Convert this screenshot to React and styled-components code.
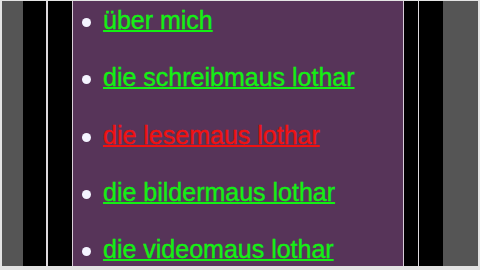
import React from "react";
import styled, { createGlobalStyle } from "styled-components";

const GlobalStyle = createGlobalStyle`
  html, body {
    margin: 0;
    padding: 0;
    background: #e6e6e6;
  }
`;

const Frame = styled.div`
  box-sizing: border-box;
  width: 480px;
  height: 270px;
  display: flex;
  overflow: hidden;
  border-style: solid;
  border-color: #e4e4e4;
  border-width: 1px 2px 4px 2px;
  background: #555555;
`;

const Strip = styled.div`
  flex: 0 0 auto;
  box-sizing: content-box;
  width: ${(p) => p.w}px;
  background: ${(p) => p.bg};
  border-left: ${(p) => (p.lineLeft ? `${p.lineLeft}px solid #dedade` : "none")};
  border-right: ${(p) => (p.lineRight ? `${p.lineRight}px solid #dedade` : "none")};
`;

const Content = styled.div`
  flex: 0 0 auto;
  width: 330px;
  background: #573459;
  border-left: 1px solid #d9cdd9;
  border-right: 1px solid #d9cdd9;
  padding-top: 5px;
`;

const Menu = styled.ul`
  list-style: none;
  margin: 0;
  padding: 0 0 0 9px;
`;

const Item = styled.li`
  display: flex;
  align-items: flex-start;
  height: 28px;
  margin-bottom: 29.25px;
  font-family: "Liberation Sans", Arial, sans-serif;
  font-size: 25px;
  line-height: 28px;
  white-space: nowrap;
`;

const Bullet = styled.span`
  flex: 0 0 auto;
  width: 9px;
  height: 9px;
  margin-top: 12px;
  margin-right: 12px;
  border-radius: 50%;
  background: #f4f4ff;
`;

const Link = styled.a`
  color: ${(p) => (p.active ? "#f01212" : "#14f014")};
  text-decoration: underline;
  text-decoration-thickness: 2px;
  -webkit-text-stroke: 0.35px currentColor;
  cursor: pointer;
`;

const items = [
  { label: "über mich" },
  { label: "die schreibmaus lothar" },
  { label: "die lesemaus lothar", active: true },
  { label: "die bildermaus lothar" },
  { label: "die videomaus lothar" },
];

export default function App() {
  return (
    <>
      <GlobalStyle />
      <Frame>
        <Strip w={21} bg="#555555" />
        <Strip w={23} bg="#000000" />
        <Strip w={24} bg="#000000" lineLeft={2} />
        <Content>
          <Menu>
            {items.map((it) => (
              <Item key={it.label}>
                <Bullet />
                <Link active={it.active}>{it.label}</Link>
              </Item>
            ))}
          </Menu>
        </Content>
        <Strip w={14} bg="#000000" lineRight={1} />
        <Strip w={24} bg="#000000" />
        <Strip w={35} bg="#555555" />
      </Frame>
    </>
  );
}
